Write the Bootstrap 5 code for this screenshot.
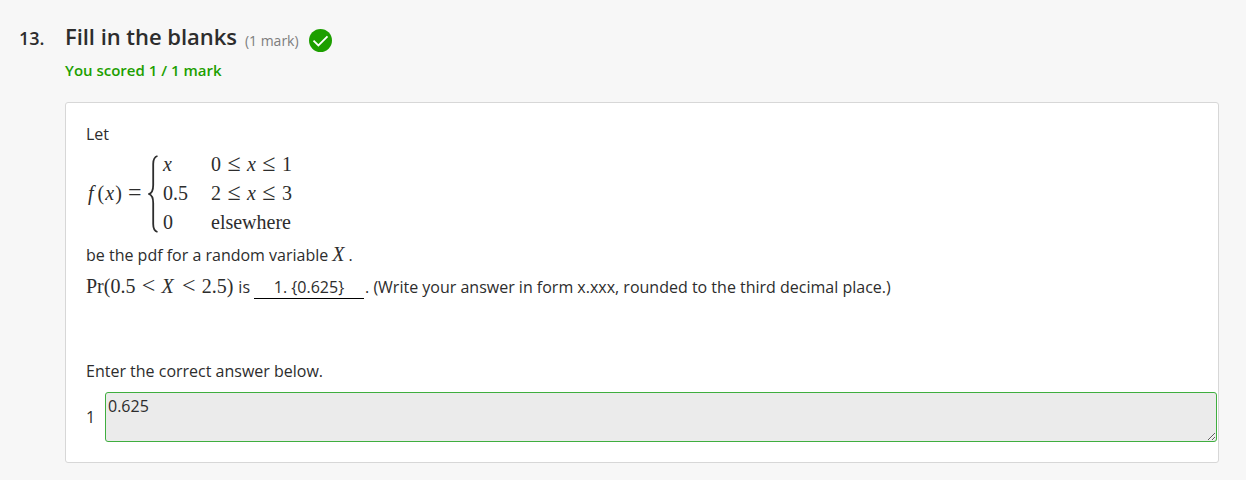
<!DOCTYPE html>
<html lang="en">
<head>
<meta charset="utf-8">
<meta name="viewport" content="width=device-width, initial-scale=1">
<title>Fill in the blanks</title>
<link href="https://cdn.jsdelivr.net/npm/bootstrap@5.3.0/dist/css/bootstrap.min.css" rel="stylesheet">
<style>
body{background:#f7f7f7;color:#2d2d2d;font-family:"Open Sans",sans-serif;font-size:16px;line-height:24px}
.question{padding:25px 27px 0 19px}
.q-number{width:46px;font-size:18px;font-weight:600;padding-top:1px}
.q-title{font-size:22px;font-weight:600;line-height:22px;letter-spacing:-.04px}
.q-marks{font-size:14px;color:#7d7d7d;padding-top:4px;margin-left:8px}
.q-tick{margin-left:9px;margin-top:3px}
.q-score{color:#1d9f00;font-weight:600;font-size:15px;margin-top:5px}
.q-card{height:361px;margin-top:20px;border:1px solid #d7d7d7;border-radius:3px;padding:19px 0 0 20px}
.math{font-family:"Liberation Serif",serif;font-size:20px}
.rel{display:inline-block;width:26px;text-align:center;font-size:24px;line-height:20px}
.piecewise{height:87px;line-height:29px;margin-top:4px}
.fx{width:62px;white-space:nowrap}
.fx-f{padding:0 4px 0 2px}
.fx-x{padding:0 1px}
.brace{margin-right:4px}
.pw-value{width:48px}
.var-x{padding-right:2px}
.blank-field{width:110px;height:24px;border-bottom:1px solid #000;text-align:center;margin:0 1px 0 4px}
.line-pdf{margin-top:5px}
.line-pr{margin-top:7px}
.word-is{margin-left:5px}
.prompt{margin-top:60px}
.answer{width:1112px;height:50px;background:#ebebeb;border:1px solid #3fae3f;border-radius:3px;padding:1px 2px;resize:vertical;color:#2d2d2d}
.answer:focus{background:#ebebeb;box-shadow:none}
.answer-row{margin-top:9px}
.answer-row label{width:19px;flex:none}
</style>
</head>
<body>
<main class="question d-flex">
  <div class="q-number flex-shrink-0">13.</div>
  <div class="flex-grow-1">
    <header class="d-flex align-items-start">
      <h1 class="q-title mb-0">Fill in the blanks</h1>
      <span class="q-marks">(1 mark)</span>
      <svg class="q-tick" width="25" height="24" viewBox="0 0 25 24" aria-hidden="true"><circle cx="12.500" cy="12.500" r="11.5" fill="#1d9f00"/><path d="M5.500 12.700 10.400 17.500 19.500 8.400" fill="none" stroke="#fff" stroke-width="1.800"/></svg>
    </header>
    <div class="q-score">You scored 1 / 1 mark</div>
    <section class="q-card bg-white">
      <div>Let</div>
      <div class="piecewise math d-flex align-items-center">
        <span class="fx"><i class="fx-f">f</i>(<i class="fx-x">x</i>)<span class="rel">=</span></span>
        <svg class="brace" width="11" height="78" viewBox="0 0 11 78" aria-hidden="true"><path d="M9.5 1C6 2 5.2 4.500 5.200 9V30C5.200 35 4 38 1 39C4 40 5.200 43 5.200 48V69C5.200 73.500 6 76 9.500 77" fill="none" stroke="#2d2d2d" stroke-width="1.800"/></svg>
        <div>
          <div class="d-flex"><span class="pw-value"><i>x</i></span><span>0<span class="rel">≤</span><i>x</i><span class="rel">≤</span>1</span></div>
          <div class="d-flex"><span class="pw-value">0.5</span><span>2<span class="rel">≤</span><i>x</i><span class="rel">≤</span>3</span></div>
          <div class="d-flex"><span class="pw-value">0</span><span>elsewhere</span></div>
        </div>
      </div>
      <div class="line-pdf d-flex align-items-baseline"><span>be the pdf for a random variable</span><span class="math ms-1"><i>X</i></span><span class="ms-1">.</span></div>
      <div class="line-pr d-flex align-items-baseline"><span class="math">Pr(0.5<span class="rel">&lt;</span><i class="var-x">X</i><span class="rel">&lt;</span>2.5)</span><span class="word-is">is</span><span class="blank-field">1. {0.625}</span><span>. (Write your answer in form x.xxx, rounded to the third decimal place.)</span></div>
      <div class="prompt">Enter the correct answer below.</div>
      <div class="answer-row d-flex align-items-center"><label for="answer">1</label><textarea id="answer" class="answer form-control" readonly>0.625</textarea></div>
    </section>
  </div>
</main>
<script src="https://cdn.jsdelivr.net/npm/bootstrap@5.3.0/dist/js/bootstrap.bundle.min.js"></script>
</body>
</html>
